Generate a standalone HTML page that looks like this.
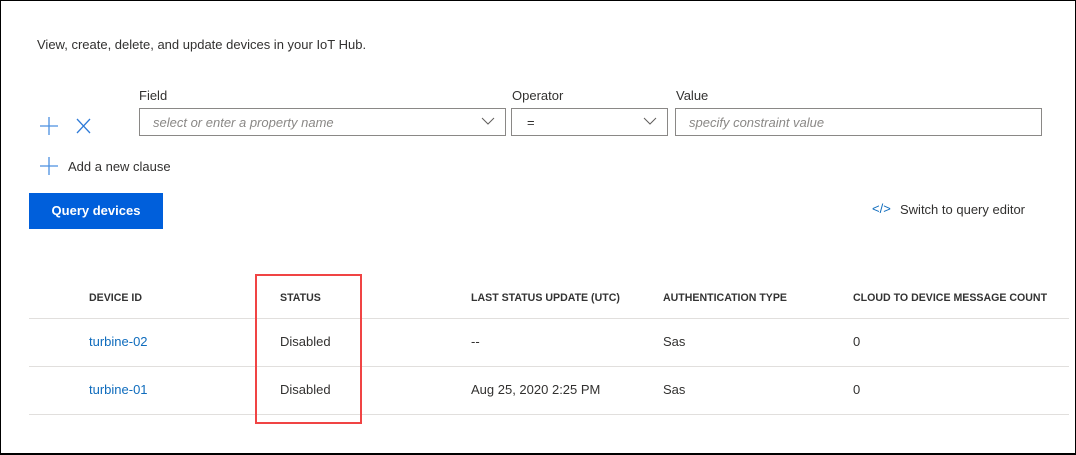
<!DOCTYPE html>
<html><head><meta charset="utf-8"><style>
*{margin:0;padding:0;box-sizing:border-box}
body{width:1076px;height:455px;background:#fff;font-family:"Liberation Sans",sans-serif;color:#323130;position:relative;overflow:hidden}
.frame{position:absolute;left:0;top:0;width:1076px;height:455px;border:1px solid #000;border-width:1px 1px 2px 1px}
.a{position:absolute;white-space:nowrap}
.t13{font-size:13px}
.inp{position:absolute;height:28px;border:1px solid #8a8886;background:#fff}
.ph{position:absolute;top:6px;font-size:13px;font-style:italic;color:#8a8886}
.chev{position:absolute;right:10px;top:8px}
.lbl{font-size:13px;top:88px}
.hd{font-size:10.6px;font-weight:bold;color:#333;top:292px}
.line{position:absolute;left:29px;width:1040px;height:1px;background:#e1dfdd}
.lnk{color:#0f6cbd}
</style></head><body>
<div class="a t13" style="left:37px;top:37px">View, create, delete, and update devices in your IoT Hub.</div>
<div class="a lbl" style="left:139px">Field</div>
<div class="a lbl" style="left:512px">Operator</div>
<div class="a lbl" style="left:676px">Value</div>
<svg class="a" style="left:38px;top:116px" width="56" height="20"><path d="M2 10H20M11 1V19" stroke="#4a8fe0" stroke-width="1.3"/><path d="M39 3L52 17M52 3L39 17" stroke="#2f7bd8" stroke-width="1.3"/></svg>
<div class="inp" style="left:139px;top:108px;width:367px"><span class="ph" style="left:13px">select or enter a property name</span><svg class="chev" width="14" height="9"><path d="M1 1L7 7L13 1" stroke="#605e5c" fill="none"/></svg></div>
<div class="inp" style="left:511px;top:108px;width:157px"><span class="ph" style="left:15px;font-style:normal;color:#323130">=</span><svg class="chev" width="14" height="9"><path d="M1 1L7 7L13 1" stroke="#605e5c" fill="none"/></svg></div>
<div class="inp" style="left:675px;top:108px;width:367px"><span class="ph" style="left:13px">specify constraint value</span></div>
<svg class="a" style="left:39px;top:156px" width="20" height="20"><path d="M1 10H19M10 1V19" stroke="#4a8fe0" stroke-width="1.3"/></svg>
<div class="a t13" style="left:68px;top:159px">Add a new clause</div>
<div class="a" style="left:29px;top:193px;width:134px;height:36px;background:#005fdb;color:#fff;font-size:13px;font-weight:bold;text-align:center;line-height:36px">Query devices</div>
<div class="a" style="left:872px;top:201px;font-size:13px;color:#0f6cbd">&lt;/&gt;</div>
<div class="a t13" style="left:900px;top:202px">Switch to query editor</div>
<div class="a hd" style="left:89px">DEVICE ID</div>
<div class="a hd" style="left:280px">STATUS</div>
<div class="a hd" style="left:471px">LAST STATUS UPDATE (UTC)</div>
<div class="a hd" style="left:663px">AUTHENTICATION TYPE</div>
<div class="a hd" style="left:853px">CLOUD TO DEVICE MESSAGE COUNT</div>
<div class="line" style="top:318px"></div>
<div class="line" style="top:366px"></div>
<div class="line" style="top:414px"></div>
<div class="a t13 lnk" style="left:89px;top:334px">turbine-02</div>
<div class="a t13" style="left:280px;top:334px">Disabled</div>
<div class="a t13" style="left:471px;top:334px">--</div>
<div class="a t13" style="left:663px;top:334px">Sas</div>
<div class="a t13" style="left:853px;top:334px">0</div>
<div class="a t13 lnk" style="left:89px;top:382px">turbine-01</div>
<div class="a t13" style="left:280px;top:382px">Disabled</div>
<div class="a t13" style="left:471px;top:382px">Aug 25, 2020 2:25 PM</div>
<div class="a t13" style="left:663px;top:382px">Sas</div>
<div class="a t13" style="left:853px;top:382px">0</div>
<div class="a" style="left:255px;top:274px;width:107px;height:150px;border:2px solid #f04444"></div>
<div class="frame"></div>
</body></html>
